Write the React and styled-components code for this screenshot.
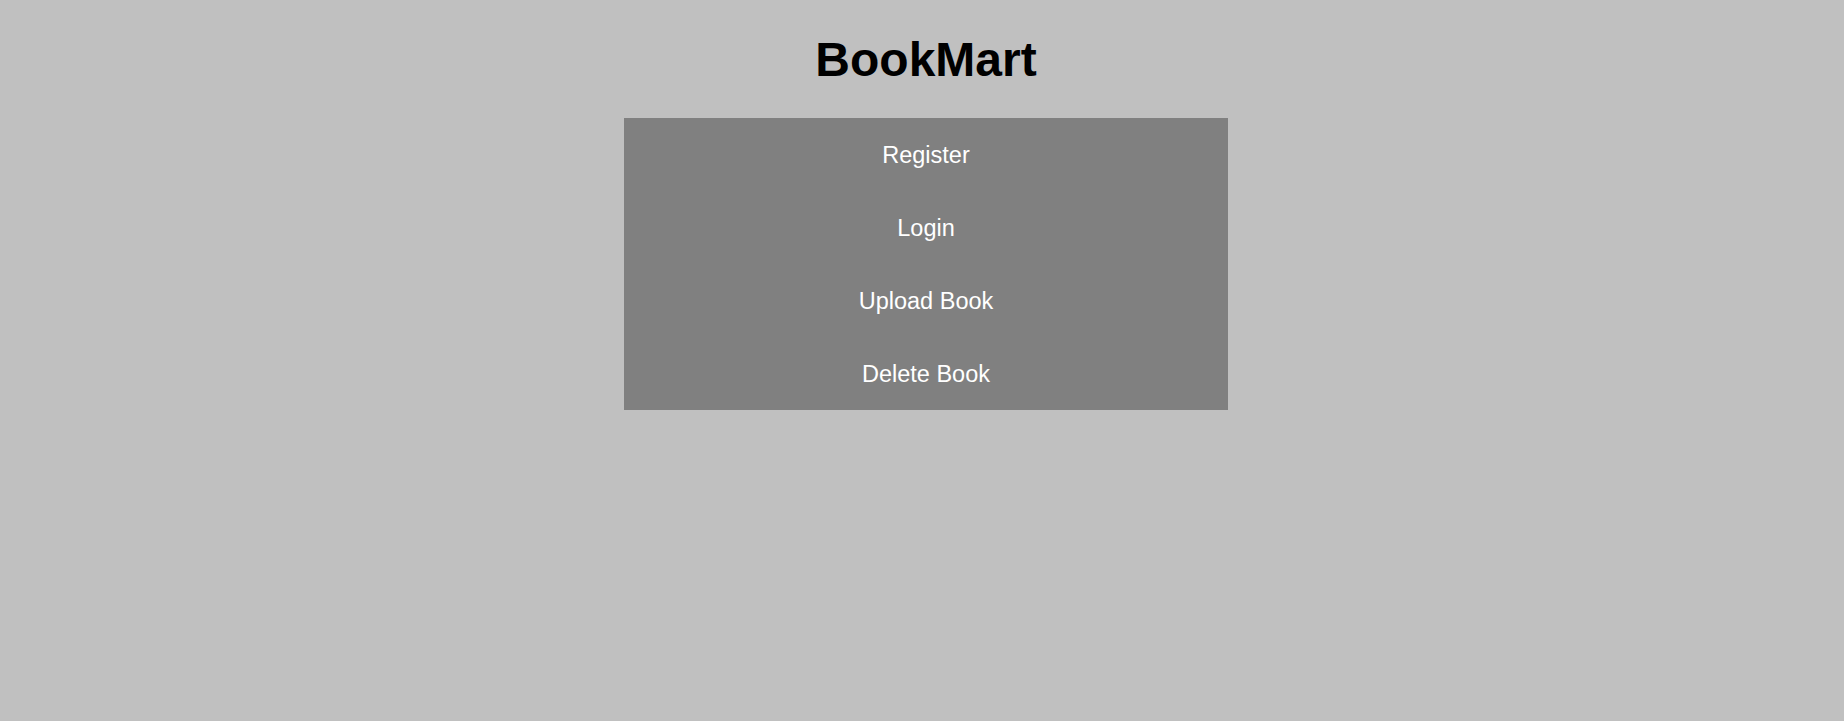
import React from 'react'
import styled, { createGlobalStyle } from 'styled-components';

const links = ['Register', 'Login', 'Upload Book', 'Delete Book'];

function App() {
  return (
    <>
      <GlobalStyle />
      <Page>
        <Title>BookMart</Title>
        <Menu>
          {links.map((label) => (
            <MenuItem key={label}>
              <MenuLink href="#">{label}</MenuLink>
            </MenuItem>
          ))}
        </Menu>
      </Page>
    </>
  )
}

const GlobalStyle = createGlobalStyle`
  html, body {
    margin: 0;
    padding: 0;
    background: #c0c0c0;
    min-height: 100%;
  }
  body {
    font-family: 'Liberation Sans', Arial, sans-serif;
  }
`

const Page = styled.div`
  display: flex;
  flex-direction: column;
  align-items: center;
  min-height: 721px;
  box-sizing: border-box;
  padding: 32px 0 0 8px;
  background: #c0c0c0;
`

const Title = styled.h1`
  margin: 0 0 31px;
  font-size: 48px;
  line-height: 55px;
  font-weight: 700;
  color: #000;
`

const Menu = styled.ul`
  list-style: none;
  margin: 0;
  padding: 0;
  width: 604px;
  background: #808080;
  display: flex;
  flex-direction: column;
`

const MenuItem = styled.li`
  height: 73px;
  box-sizing: border-box;
  padding-top: 2px;
  display: flex;
  align-items: center;
  justify-content: center;
`

const MenuLink = styled.a`
  color: #fff;
  font-size: 23.5px;
  line-height: 27px;
  text-decoration: none;
`

export default App
